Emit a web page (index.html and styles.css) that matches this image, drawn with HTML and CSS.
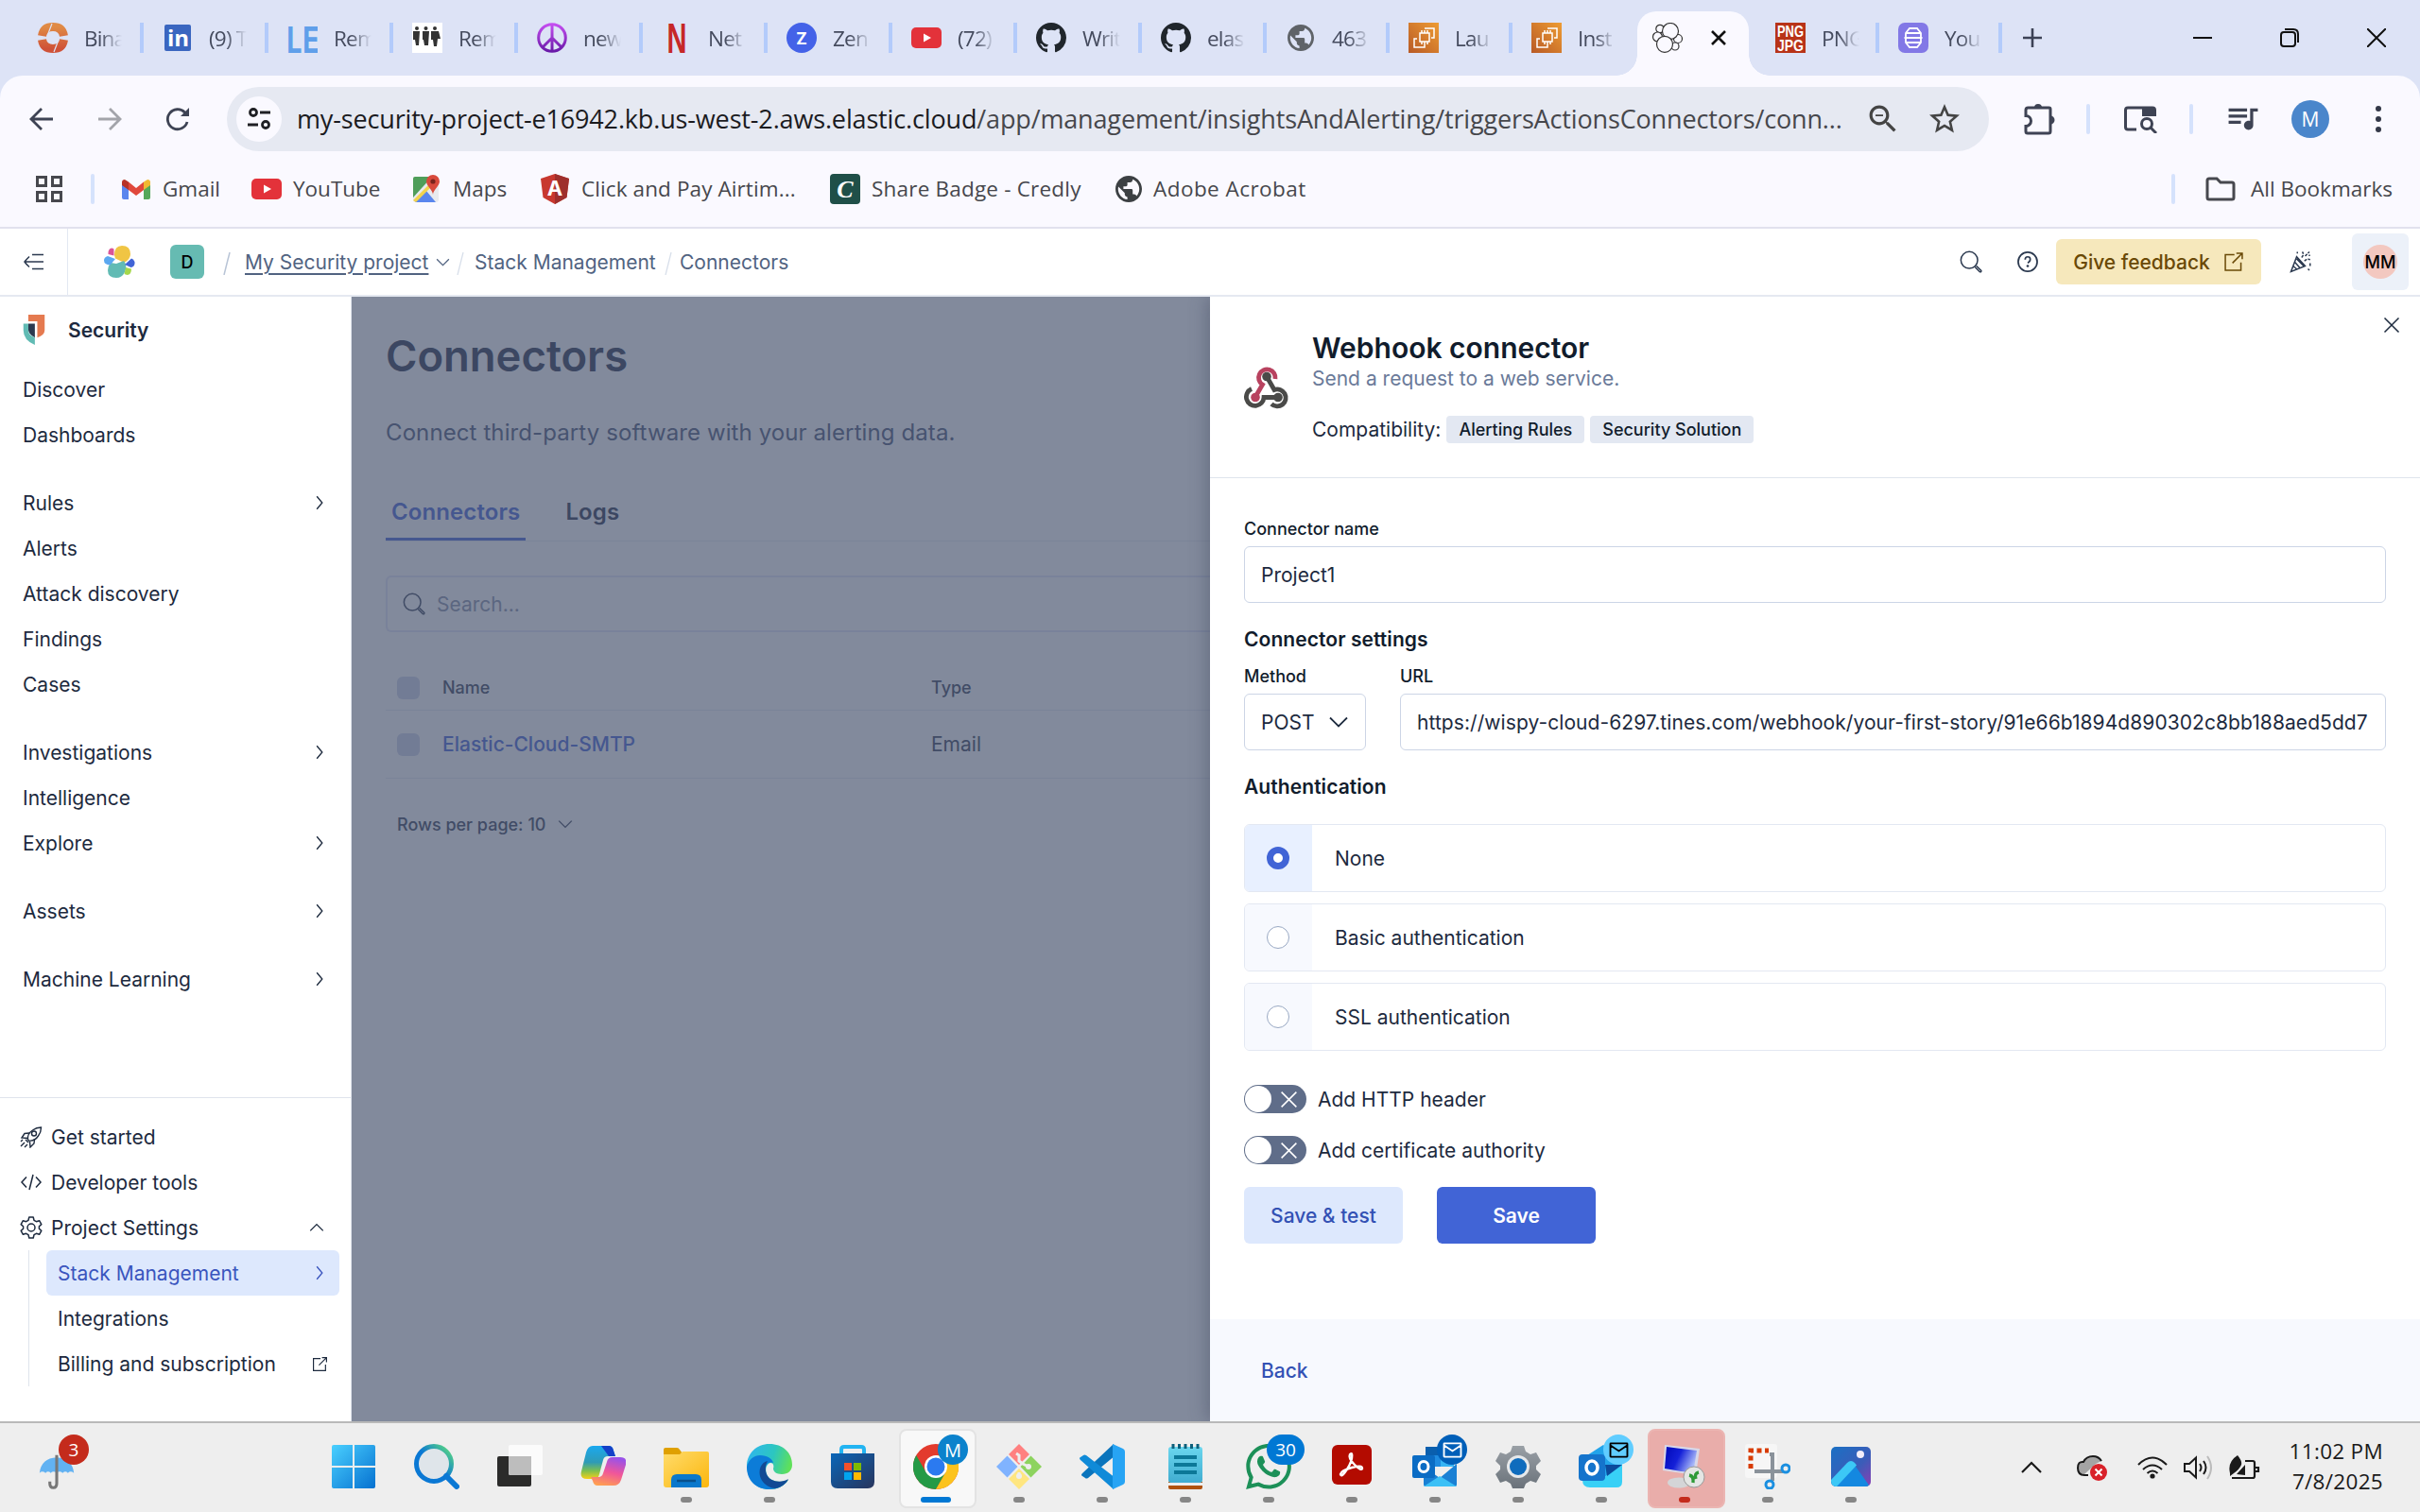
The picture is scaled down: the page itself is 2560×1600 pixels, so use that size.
FILE: index.html
```html
<!DOCTYPE html>
<html lang="en">
<head>
<meta charset="utf-8">
<title>Connectors - Elastic</title>
<link rel="stylesheet" href="styles.css">
</head>
<body>
<svg class="defs" width="0" height="0" aria-hidden="true">
  <defs>
    <linearGradient id="gBlue" x1="0" y1="0" x2="1" y2="1"><stop offset="0" stop-color="#4ad0ff"/><stop offset="1" stop-color="#0671d0"/></linearGradient>
    <linearGradient id="gAws" x1="0" y1="1" x2="1" y2="0"><stop offset="0" stop-color="#b85a26"/><stop offset="1" stop-color="#ee9c33"/></linearGradient>
    <linearGradient id="gPeace" x1="0" y1="0" x2="0" y2="1"><stop offset="0" stop-color="#c44df0"/><stop offset="1" stop-color="#6a1aa8"/></linearGradient>
    <linearGradient id="gBin" x1="0" y1="0" x2="0" y2="1"><stop offset="0" stop-color="#e08a45"/><stop offset="1" stop-color="#cf5238"/></linearGradient>
    <linearGradient id="gFolder" x1="0" y1="0" x2="1" y2="1"><stop offset="0" stop-color="#ffdc6b"/><stop offset="1" stop-color="#fbb60d"/></linearGradient>
    <linearGradient id="gDeep" x1="0" y1="0" x2="1" y2="1"><stop offset="0" stop-color="#0a66b8"/><stop offset="1" stop-color="#29355c"/></linearGradient>
    <linearGradient id="gRing" x1="0" y1="1" x2="1" y2="0"><stop offset="0.5" stop-color="#0a78d4"/><stop offset="1" stop-color="#60e07a"/></linearGradient>
    <linearGradient id="gEdge" x1="0" y1="0" x2="1" y2="0.3"><stop offset="0" stop-color="#2fb4f2"/><stop offset="0.6" stop-color="#2cc6c0"/><stop offset="1" stop-color="#5fe05a"/></linearGradient>
    <linearGradient id="gCopA" x1="0" y1="0" x2="0" y2="1"><stop offset="0" stop-color="#1aa8f0"/><stop offset="0.5" stop-color="#2f9bb5"/><stop offset="0.75" stop-color="#7cbf50"/><stop offset="1" stop-color="#f5d018"/></linearGradient>
    <linearGradient id="gCopB" x1="0.6" y1="0" x2="0.3" y2="1"><stop offset="0" stop-color="#9a52e8"/><stop offset="0.5" stop-color="#f0569a"/><stop offset="1" stop-color="#ffa050"/></linearGradient>
    <linearGradient id="gPhoto" x1="0" y1="0" x2="1" y2="1"><stop offset="0" stop-color="#1a70c4"/><stop offset="0.6" stop-color="#3c5cb8"/><stop offset="1" stop-color="#8a3fb4"/></linearGradient>
    <linearGradient id="gScreen" x1="0" y1="0" x2="1" y2="0.4"><stop offset="0" stop-color="#0008b8"/><stop offset="0.5" stop-color="#1420d8"/><stop offset="1" stop-color="#a8b8f8"/></linearGradient>
    <linearGradient id="gNote" x1="0" y1="0" x2="0" y2="1"><stop offset="0" stop-color="#6ad6ee"/><stop offset="1" stop-color="#40acd0"/></linearGradient>
    <linearGradient id="gGear" x1="0" y1="0" x2="0" y2="1"><stop offset="0" stop-color="#9aa0a6"/><stop offset="1" stop-color="#6a727a"/></linearGradient>
    <symbol id="github" viewBox="0 0 16 16"><path d="M8 0C3.58 0 0 3.58 0 8c0 3.54 2.29 6.53 5.47 7.59.4.07.55-.17.55-.38 0-.19-.01-.82-.01-1.49-2.01.37-2.53-.49-2.69-.94-.09-.23-.48-.94-.82-1.13-.28-.15-.68-.52-.01-.53.63-.01 1.08.58 1.23.82.72 1.21 1.87.87 2.33.66.07-.52.28-.87.51-1.07-1.78-.2-3.64-.89-3.64-3.95 0-.87.31-1.59.82-2.15-.08-.2-.36-1.02.08-2.12 0 0 .67-.21 2.2.82.64-.18 1.32-.27 2-.27.68 0 1.36.09 2 .27 1.53-1.04 2.2-.82 2.2-.82.44 1.1.16 1.92.08 2.12.51.56.82 1.27.82 2.15 0 3.07-1.87 3.75-3.65 3.95.29.25.54.73.54 1.48 0 1.07-.01 1.93-.01 2.2 0 .21.15.46.55.38A8.013 8.013 0 0016 8c0-4.42-3.58-8-8-8z" fill="#20262c"/></symbol>
    <symbol id="globe" viewBox="2 2 20 20"><path fill="currentColor" d="M12 2C6.48 2 2 6.48 2 12s4.48 10 10 10 10-4.48 10-10S17.52 2 12 2zm-1 17.93c-3.95-.49-7-3.85-7-7.93 0-.62.08-1.21.21-1.79L9 15v1c0 1.1.9 2 2 2v1.93zm6.9-2.54c-.26-.81-1-1.39-1.9-1.39h-1v-3c0-.55-.45-1-1-1H8v-2h2c.55 0 1-.45 1-1V7h2c1.1 0 2-.9 2-2v-.41c2.93 1.19 5 4.06 5 7.41 0 2.08-.8 3.97-2.1 5.39z"/></symbol>
    <symbol id="youtube" viewBox="0 0 32 32"><rect y="5" width="32" height="22" rx="5" fill="#e3323a"/><path d="M13 11.500l8 4.500-8 4.500z" fill="#fff"/></symbol>
    <symbol id="aws" viewBox="0 0 32 32"><rect width="32" height="32" fill="url(#gAws)"/><g fill="none" stroke="#fff" stroke-width="1.500"><rect x="12" y="11" width="10" height="9"/><path d="M14 8v3M17 8v3M20 8v3M14 20v3M17 20v3M20 20v3M9 17H6v9h11v-3M17 6h10v10h-3"/></g></symbol>
    <symbol id="chev-r" viewBox="0 0 16 16"><path d="M5.500 2l5 6-5 6" fill="none" stroke="currentColor" stroke-width="1.200"/></symbol>
    <symbol id="chev-d" viewBox="0 0 16 16"><path d="M2 5l6 6 6-6" fill="none" stroke="currentColor" stroke-width="1.200"/></symbol>
    <symbol id="search" viewBox="0 0 16 16"><g fill="none" stroke="currentColor"><circle cx="6.800" cy="6.800" r="5.900"/><path d="M10.800 11.600l3.400 3.500q.6.300.9-.1t0-.9L11.700 10.800"/></g></symbol>
    <symbol id="popout" viewBox="0 0 16 16"><path d="M8.500 2.500h-7v12h12v-6M10 1.500h4.500V6M14.500 1.500l-7.500 7.500" fill="none" stroke="currentColor" stroke-width="1.100"/></symbol>
    <symbol id="close" viewBox="0 0 16 16"><path d="M2 2l12 12M14 2L2 14" fill="none" stroke="currentColor" stroke-width="1.200"/></symbol>
  </defs>
</svg>

<header class="browser">
  <div class="tabstrip">
    <div class="tab"><svg class="fav" viewBox="0 0 32 32"><g fill="none" stroke="url(#gBin)" stroke-width="9"><path d="M4.500 14Q6 4.500 16 4.500T27.500 14M27.500 18Q26 27.500 16 27.500T4.500 18"/></g><path d="M10 14L15 1M22 18l-5 13" stroke="#dde3f6" stroke-width="1.200"/></svg><span>Bina</span></div>
    <div class="tab"><svg class="fav" viewBox="0 0 32 32"><rect x="2" y="2" width="28" height="28" rx="2" fill="#3a66c0"/><text x="5" y="25" class="ico-in">in</text></svg><span>(9) T</span></div>
    <div class="tab"><svg class="fav" viewBox="0 0 32 32"><text x="-2" y="32" class="ico-le" textLength="36" lengthAdjust="spacingAndGlyphs">LE</text></svg><span>Rem</span></div>
    <div class="tab"><svg class="fav" viewBox="0 0 32 32"><rect width="32" height="32" fill="#fff"/><g fill="#333"><circle cx="5" cy="6" r="2"/><circle cx="14.500" cy="6" r="2"/><circle cx="24" cy="6" r="2"/><path d="M1 9h7l-1 15H4L3 18H1zM11 9h7l-1 15h-4l-1-6h-1zM20 9h8l2 8h-3l-1 8h-3l-1-7h-2z"/></g></svg><span>Rem</span></div>
    <div class="tab"><svg class="fav" viewBox="0 0 32 32"><g fill="none" stroke="url(#gPeace)" stroke-width="3"><circle cx="16" cy="16" r="14.300"/><path d="M16.010 2v28M16 16L6 26M16 16l10 10"/></g></svg><span>new</span></div>
    <div class="tab"><svg class="fav" viewBox="0 0 32 32"><text x="5.500" y="32" class="ico-n" textLength="21" lengthAdjust="spacingAndGlyphs">N</text></svg><span>Net</span></div>
    <div class="tab"><svg class="fav" viewBox="0 0 32 32"><circle cx="16" cy="16" r="16" fill="#4462e8"/><text x="16" y="22.500" text-anchor="middle" class="ico-z">Z</text></svg><span>Zen</span></div>
    <div class="tab"><svg class="fav"><use href="#youtube"/></svg><span>(72)</span></div>
    <div class="tab"><svg class="fav"><use href="#github"/></svg><span>Writ</span></div>
    <div class="tab"><svg class="fav"><use href="#github"/></svg><span>elas</span></div>
    <div class="tab narrow"><svg class="fav globe"><use href="#globe"/></svg><span>463</span></div>
    <div class="tab narrow"><svg class="fav"><use href="#aws"/></svg><span>Lau</span></div>
    <div class="tab inst"><svg class="fav"><use href="#aws"/></svg><span>Inst</span></div>
    <div class="tab-active"><svg class="fav" viewBox="0 0 32 32"><g fill="#faf9ff" stroke="#333" stroke-width="1.200"><circle cx="8" cy="6.500" r="4.200"/><circle cx="27" cy="17" r="4.500"/><circle cx="5.500" cy="15" r="5"/><circle cx="24" cy="25" r="4"/><circle cx="19" cy="9" r="8.500"/><circle cx="13" cy="22.800" r="8.500"/></g></svg><svg class="tab-x" viewBox="0 0 16 16"><path d="M1 1l14 14M15 1L1 15" stroke="#111" stroke-width="2.600"/></svg></div>
    <div class="tab png"><svg class="fav" viewBox="0 0 32 32"><rect width="32" height="32" fill="#b83318"/><text x="2" y="14.500" class="ico-png" textLength="28" lengthAdjust="spacingAndGlyphs">PNG</text><text x="2" y="29.500" class="ico-png" textLength="28" lengthAdjust="spacingAndGlyphs">JPG</text></svg><span>PNG</span></div>
    <div class="tab narrow"><svg class="fav" viewBox="0 0 32 32"><rect width="32" height="32" rx="7" fill="#8278e6"/><g fill="none" stroke="#fff" stroke-width="1.800"><path d="M12 6h8l4 5v10l-4 5h-8l-4-5V11zM8 11h16M6.500 16h19M8 21h16"/></g></svg><span>You</span></div>
    <svg class="plus" viewBox="0 0 20 20"><path d="M10 0v20M0 10h20" stroke="#3c4256" stroke-width="2.600"/></svg>
    <div class="winctl">
      <svg viewBox="0 0 20 20"><path d="M0 10h20" stroke="#111" stroke-width="2"/></svg>
      <svg viewBox="0 0 20 20"><g fill="none" stroke="#111" stroke-width="2"><rect x="1" y="4" width="15" height="15" rx="3"/><path d="M5 1h9q5 0 5 5v9"/></g></svg>
      <svg viewBox="0 0 20 20"><path d="M0 0l20 20M20 0L0 20" stroke="#111" stroke-width="2"/></svg>
    </div>
  </div>

  <div class="toolbar">
    <svg class="nav" viewBox="0 0 28 28"><path d="M26 14H3M14 3L3 14l11 11" fill="none" stroke="#3e4354" stroke-width="2.800"/></svg>
    <svg class="nav" viewBox="0 0 28 28"><path d="M2 14h23M14 3l11 11-11 11" fill="none" stroke="#a3a4aa" stroke-width="2.800"/></svg>
    <svg class="nav" viewBox="0 0 28 28"><path d="M24 17a10.500 10.500 0 1 1-2.500-10L25 10" fill="none" stroke="#3e4354" stroke-width="2.800"/><path d="M26 2v9h-9z" fill="#3e4354"/></svg>
    <div class="omnibox">
      <div class="chip"><svg viewBox="0 0 28 28"><g fill="none" stroke="#1f2024" stroke-width="2.800"><circle cx="8" cy="7" r="3.500"/><path d="M15 7h11M2 20h11"/><circle cx="21" cy="20" r="3.500"/></g></svg></div>
      <div class="url"><b>my-security-project-e16942.kb.us-west-2.aws.elastic.cloud</b>/app/management/insightsAndAlerting/triggersActionsConnectors/conn...</div>
      <svg class="oi" viewBox="2 2 20 20"><path fill="#444" d="M15.500 14h-.79l-.28-.27C15.410 12.590 16 11.110 16 9.500 16 5.910 13.090 3 9.500 3S3 5.910 3 9.500 5.910 16 9.500 16c1.610 0 3.090-.59 4.230-1.570l.27.28v.79l5 4.990L20.490 19l-4.990-5zm-6 0C7.010 14 5 11.990 5 9.500S7.010 5 9.500 5 14 7.010 14 9.500 11.990 14 9.500 14zM7 9h5v1.200H7z"/></svg>
      <svg class="oi star" viewBox="2 2 20 20"><path fill="#444" d="M22 9.240l-7.190-.62L12 2 9.190 8.630 2 9.240l5.460 4.730L5.820 21 12 17.270 18.180 21l-1.630-7.030L22 9.240zM12 15.400l-3.760 2.270 1-4.280-3.320-2.880 4.380-.38L12 6.100l1.710 4.040 4.380.38-3.320 2.880 1 4.280L12 15.400z"/></svg>
    </div>
    <svg class="ext" viewBox="0 0 36 36"><path d="M4 8.500q0-2.500 2.500-2.500h22q1.500 0 1.500 1.500V31q0 2-2 2H6q-2 0-2-2v-5.500a5.500 5.500 0 0 0 0-11z" fill="none" stroke="#3e4354" stroke-width="3"/><path d="M13 6a4 4 0 0 1 8 0zM30 14.500a4 4 0 0 1 0 9z" fill="#3e4354"/></svg>
    <i class="tsep s1"></i>
    <svg class="tsearch" viewBox="0 0 36 30"><path d="M14 26H5q-2.500 0-2.500-2.500v-18Q2.500 3 5 3h26q2.500 0 2.500 2.500V12" fill="none" stroke="#3e4354" stroke-width="3"/><path d="M20 3h14v9H20z" fill="#3e4354"/><circle cx="25" cy="20" r="5.500" fill="none" stroke="#3e4354" stroke-width="3"/><path d="M29 24l6 6" stroke="#3e4354" stroke-width="3"/></svg>
    <i class="tsep s2"></i>
    <svg class="music" viewBox="3 5 19 16"><path fill="#3e4354" d="M15 6H3v2h12V6zm0 4H3v2h12v-2zM3 16h8v-2H3v2zM17 6v8.180c-.31-.11-.65-.18-1-.18-1.660 0-3 1.340-3 3s1.340 3 3 3 3-1.340 3-3V8h3V6h-5z"/></svg>
    <div class="profile">M</div>
    <svg class="dots" viewBox="0 0 8 28"><g fill="#333848"><circle cx="4" cy="3" r="3"/><circle cx="4" cy="14" r="3"/><circle cx="4" cy="25" r="3"/></g></svg>
  </div>

  <div class="bookmarks">
    <svg class="apps" viewBox="0 0 28 28"><g fill="none" stroke="#47484e" stroke-width="3"><rect x="1.500" y="1.500" width="9" height="9"/><rect x="17.500" y="1.500" width="9" height="9"/><rect x="1.500" y="17.500" width="9" height="9"/><rect x="17.500" y="17.500" width="9" height="9"/></g></svg>
    <i class="bsep"></i>
    <div class="bm gm"><svg viewBox="0 0 32 32"><path d="M1 8v17q0 2 2 2h5V14z" fill="#5a86ee"/><path d="M31 8v17q0 2-2 2h-5V14z" fill="#55a85a"/><path d="M24 8.500L28 6q3 0 3 3v3l-7 5z" fill="#f0b932"/><path d="M8 8.500L4 6Q1 6 1 9v3l7 5z" fill="#b83228"/><path d="M8 8.500l8 6.500 8-6.500V17l-8 6-8-6z" fill="#e0483c"/></svg><span>Gmail</span></div>
    <div class="bm yt"><svg><use href="#youtube"/></svg><span>YouTube</span></div>
    <div class="bm mp"><svg viewBox="0 0 32 32"><rect x="2" y="3" width="27" height="27" rx="3" fill="#e8eaee"/><path d="M2 5q0-2 2-2h18L2 25z" fill="#4f9e5a"/><path d="M4 30l12-12 10 12z" fill="#5a86ee"/><path d="M2 28L24 6l2 3L5 30z" fill="#f2d34e"/><path d="M23 1a7 7 0 0 0-7 7c0 5 7 9 7 14 0-5 7-9 7-14a7 7 0 0 0-7-7z" fill="#d84a3c"/><circle cx="23" cy="8" r="2.600" fill="#7a241c"/></svg><span>Maps</span></div>
    <div class="bm an"><svg viewBox="0 0 32 32"><path d="M16 0l15 5-2.500 20L16 32 3.500 25 1 5z" fill="#c8382f"/><path d="M16 0l15 5-2.500 20L16 32z" fill="#9e2f2c"/><text x="16" y="23" text-anchor="middle" class="ico-a">A</text></svg><span>Click and Pay Airtim...</span></div>
    <div class="bm cr"><svg viewBox="0 0 32 32"><rect width="32" height="32" rx="4" fill="#1f4f48"/><text x="16" y="25" text-anchor="middle" class="ico-c">C</text></svg><span>Share Badge - Credly</span></div>
    <div class="bm ad"><svg class="globe"><use href="#globe"/></svg><span>Adobe Acrobat</span></div>
    <div class="allbm"><i class="bsep"></i><svg viewBox="0 0 32 26"><path d="M2 4q0-2 2-2h8l4 4h12q2 0 2 2v14q0 2-2 2H4q-2 0-2-2z" fill="none" stroke="#47484e" stroke-width="3"/></svg><span>All Bookmarks</span></div>
  </div>
</header>

<div class="appbar">
  <div class="collapse"><svg viewBox="0 0 24 24"><path d="M10 4.500h12M3 12h19M10 19.500h12M7 6.500q-3 3-5 5.500 2 3 5 5.500" fill="none" stroke="#2b394f" stroke-width="1.500"/></svg></div>
  <svg class="elastic" viewBox="0 0 34 34"><path d="M12 10q0-10 8-10 9 0 9 9 0 5-6.500 9L13 13.500z" fill="#f0c544"/><path d="M14 19l8-3q4 5 1 12-3 6-9 6-9 0-9-8 0-4 3-8z" fill="#61bbb4"/><path d="M5 11l8 3-5.500 6.500Q1 20 1 15.500 1 12 5 11z" fill="#5ba8f0"/><path d="M11.500 3.500v7L5.500 9Q5 3 9.500 2.500z" fill="#da5597"/><path d="M30 13.500q4 2 3.500 5.500T29.500 23l-6.500-3z" fill="#4164d6"/><path d="M24 23l6 1.500q0 6-4.500 6.500l-3-1z" fill="#a5d84c"/></svg>
  <div class="dbadge">D</div>
  <svg class="sl dark" viewBox="0 0 8 24"><path d="M7 0L1 24" stroke="#b8c4d6" stroke-width="1.500"/></svg>
  <div class="crumb c1"><u>My Security project</u><svg><use href="#chev-d"/></svg></div>
  <svg class="sl" viewBox="0 0 8 24"><path d="M7 0L1 24" stroke="#d8dfea" stroke-width="1.300"/></svg>
  <div class="crumb c2">Stack Management</div>
  <svg class="sl" viewBox="0 0 8 24"><path d="M7 0L1 24" stroke="#d8dfea" stroke-width="1.300"/></svg>
  <div class="crumb c3">Connectors</div>
  <div class="appright">
    <svg class="ai"><use href="#search"/></svg>
    <svg class="ai help" viewBox="0 0 16 16"><g fill="none" stroke="currentColor" stroke-width="1.150"><circle cx="8" cy="8" r="6.700"/><path d="M6.200 6.500q0-2 1.800-2t1.800 1.700T8 8.800"/></g><circle cx="8" cy="11" r=".9" fill="currentColor"/></svg>
    <div class="feedback">Give feedback<svg><use href="#popout"/></svg></div>
    <svg class="ai party" viewBox="0 0 16 16"><g fill="none" stroke="currentColor"><path d="M5 4.500L1 15l10-4zM3.500 8l4 4.500M5 6l5 5M2.500 11l3 2.500"/><path d="M8.500 5q2-2 .5-4M10.500 7.500q2-2 4-1M11 4l3-3" stroke-dasharray="2 .8"/><path d="M14.500 9v2M13 13l1 1M5.500 1v1.200M13.500 3.500h1"/></g></svg>
    <div class="user"><span>MM</span></div>
  </div>
</div>

<div class="workspace">
  <nav class="side">
    <div class="solution"><svg viewBox="0 0 26 37"><path d="M6 0h20v19q0 6-9 9V8H6z" fill="#e57a50"/><path d="M6 11h8v17Q6 24 6 18z" fill="#2b394f"/><path d="M0 11h6v8q0 6 8 9v9Q0 31 0 19z" fill="#61bbb4"/></svg><b>Security</b></div>
    <div class="grp"><div class="it">Discover</div><div class="it">Dashboards</div></div>
    <div class="grp"><div class="it">Rules<svg><use href="#chev-r"/></svg></div><div class="it">Alerts</div><div class="it">Attack discovery</div><div class="it">Findings</div><div class="it">Cases</div></div>
    <div class="grp"><div class="it">Investigations<svg><use href="#chev-r"/></svg></div><div class="it">Intelligence</div><div class="it">Explore<svg><use href="#chev-r"/></svg></div></div>
    <div class="grp"><div class="it">Assets<svg><use href="#chev-r"/></svg></div></div>
    <div class="grp"><div class="it">Machine Learning<svg><use href="#chev-r"/></svg></div></div>
    <div class="foot">
      <div class="fi"><svg viewBox="0 0 24 24"><g fill="none" stroke="currentColor" stroke-width="1.400"><path d="M9 15q-1-6 5-10 4-3 9-3 0 5-3 9-4 6-10 5z" transform="translate(-.5 0)"/><circle cx="15" cy="8.500" r="2.500"/><path d="M10 8L5 8.500 2 13l6 .5M15.500 14.500L15 19l-4 4-.5-6M6 15l3 3M5 18l-4 4M8 20l-3 3M3 15l-2 2"/></g></svg>Get started</div>
      <div class="fi"><svg viewBox="0 0 24 24"><path d="M7 6.500L2 12l5 5.500M17 6.500l5 5.500-5 5.500M14 4l-4 16" fill="none" stroke="currentColor" stroke-width="1.500"/></svg>Developer tools</div>
      <div class="fi"><svg viewBox="0 0 24 24"><g fill="none" stroke="currentColor" stroke-width="1.500" stroke-linejoin="round"><circle cx="12" cy="12" r="4"/><path d="M9.800 1h4.400l.8 3.300 2.400 1.400 3.200-1 2.200 3.900-2.400 2.200v2.400l2.400 2.200-2.200 3.900-3.200-1-2.400 1.400-.8 3.300H9.800L9 19.700l-2.400-1.400-3.200 1-2.200-3.900 2.400-2.200v-2.400L1.200 8.600l2.200-3.900 3.200 1L9 4.300z"/></g></svg>Project Settings<svg class="up" viewBox="0 0 16 16"><path d="M2 11l6-6 6 6" fill="none" stroke="currentColor" stroke-width="1.200"/></svg></div>
      <div class="sub">
        <div class="si on">Stack Management<svg><use href="#chev-r"/></svg></div>
        <div class="si">Integrations</div>
        <div class="si">Billing and subscription<svg class="po"><use href="#popout"/></svg></div>
      </div>
    </div>
  </nav>

  <main class="main">
    <h1>Connectors</h1>
    <p class="lead">Connect third-party software with your alerting data.</p>
    <div class="tabs"><span class="cur">Connectors</span><span>Logs</span></div>
    <div class="searchbox"><svg><use href="#search"/></svg>Search...</div>
    <div class="row head"><i class="cb"></i><span class="nm">Name</span><span>Type</span></div>
    <div class="row"><i class="cb"></i><span class="nm link">Elastic-Cloud-SMTP</span><span>Email</span></div>
    <div class="pager">Rows per page: 10<svg><use href="#chev-d"/></svg></div>
  </main>

  <aside class="flyout">
    <svg class="fclose"><use href="#close"/></svg>
    <div class="fhead">
      <svg viewBox="0 0 48 46"><g fill="none" stroke-width="4.800"><path d="M12 33L19.500 20A8.800 8.800 0 1 1 33 14" stroke="#b8425f"/><path d="M24 11.500L32 25.500a9 9 0 1 1-3 15" stroke="#4a4a48"/><path d="M36 33.500H21a9.300 9.300 0 1 1-13-9" stroke="#4a4a48"/></g><circle cx="24" cy="11.500" r="4.800" fill="#4a4a48"/><circle cx="12" cy="33.500" r="4.800" fill="#b8425f"/><circle cx="36" cy="33.500" r="4.800" fill="#4a4a48"/></svg>
      <div>
        <h2>Webhook connector</h2>
        <p>Send a request to a web service.</p>
        <div class="compat">Compatibility:<span>Alerting Rules</span><span>Security Solution</span></div>
      </div>
    </div>
    <div class="fbody">
      <label>Connector name</label>
      <div class="input">Project1</div>
      <h3>Connector settings</h3>
      <div class="pair">
        <div class="method"><label>Method</label><div class="input">POST<svg><use href="#chev-d"/></svg></div></div>
        <div class="urlf"><label>URL</label><div class="input">https://wispy-cloud-6297.tines.com/webhook/your-first-story/91e66b1894d890302c8bb188aed5dd7</div></div>
      </div>
      <h3>Authentication</h3>
      <div class="cards">
        <div class="card sel"><div><i></i></div><span>None</span></div>
        <div class="card"><div><i></i></div><span>Basic authentication</span></div>
        <div class="card"><div><i></i></div><span>SSL authentication</span></div>
      </div>
      <div class="switches">
        <div class="sw"><i><b></b><svg><use href="#close"/></svg></i>Add HTTP header</div>
        <div class="sw"><i><b></b><svg><use href="#close"/></svg></i>Add certificate authority</div>
      </div>
      <div class="btns"><div class="btn soft">Save &amp; test</div><div class="btn solid">Save</div></div>
    </div>
    <div class="ffoot">Back</div>
  </aside>
</div>

<footer class="taskbar">
  <div class="weather"><svg viewBox="0 0 44 44"><path d="M2 25Q4 8 22 7q18 1 20 18-4-3-7 0-3-3-6 0-4-3-7 0-4-3-7 0-3-3-6 0-4-3-7 0z" fill="#62b2f2"/><path d="M22 4v33q0 5-4 5t-4-5v-2" fill="none" stroke="#777" stroke-width="3.400"/></svg><span>3</span></div>
  <div class="tasks">
    <div class="t"><svg viewBox="0 0 48 48"><g fill="url(#gBlue)"><rect x="1" y="1" width="46" height="46" rx="2"/></g><path d="M24 0v48M0 24h48" stroke="#eee" stroke-width="2"/></svg></div>
    <div class="t"><svg viewBox="0 0 48 48"><circle cx="21" cy="21" r="18.500" fill="#dfe5ea" stroke="url(#gRing)" stroke-width="5"/><path d="M34 34l11 11" stroke="#0a78d4" stroke-width="6" stroke-linecap="round"/></svg></div>
    <div class="t"><svg viewBox="0 0 48 48"><rect x="0" y="13" width="36" height="32" rx="2" fill="#2b2b2a"/><rect x="12" y="1" width="36" height="32" rx="2" fill="#fbfbfb"/><path d="M12 13h24v20H14q-2 0-2-2z" fill="#bdbdbd"/></svg></div>
    <div class="t"><svg viewBox="0 0 48 48"><path d="M13 2h17q4 0 5 5l2 6h-8q-4 0-5 4l-4 15q-1 5-5 5H7Q-1 37 1 29L6 9q2-7 7-7z" fill="url(#gCopA)"/><path d="M22 2h8q4 0 5 5l2 6h-7z" fill="#1440c8"/><path d="M35 44H18q-4 0-5-5l-2-4h8q4 0 5-4l4-12q1-5 6-5h8q8 0 6 8l-5 16q-2 6-8 6z" fill="url(#gCopB)"/></svg></div>
    <div class="t"><svg viewBox="0 0 48 48"><path d="M0 12V6q0-2 2-2h12q2 0 3 2l3 4v4z" fill="#dfa000"/><path d="M0 11h17l3-3h26q2 0 2 2v33q0 3-3 3H3q-3 0-3-3z" fill="url(#gFolder)"/><path d="M8 46V38q0-6 6-6h20q6 0 6 6v8z" fill="#0a78cc"/><path d="M14 39h20" stroke="#08508c" stroke-width="2.500"/></svg><i></i></div>
    <div class="t"><svg viewBox="0 0 48 48"><path d="M24 0C10 0 1 10 0 22 0 38 10 48 24 48c8 0 15-3 20-10-8 4-20 2-23-6-2-6 0-11 4-12 3 0 4 3 3 6 0 3 3 6 9 6 7 0 11-4 11-10C48 9 38 0 24 0z" fill="url(#gEdge)"/><path d="M0 24c2-8 8-12 14-12 8 0 13 4 14 8-4-2-9 1-9 9 0 9 9 13 16 13 4 0 7-2 9-4-5 7-12 10-20 10C9 48 0 38 0 24z" fill="#0c7cd8"/><path d="M22 18c-9 2-11 14-5 22 3 4 9 7 13 7 6-1 12-5 14-10-8 5-20 3-23-5-2-5-1-11 1-14z" fill="#124a94"/></svg><i></i></div>
    <div class="t"><svg viewBox="0 0 48 48"><path d="M12 10V6q0-3 3-3h18q3 0 3 3v4" fill="none" stroke="#22b4f2" stroke-width="4"/><path d="M1 10h46v30q0 7-7 7H8q-7 0-7-7z" fill="url(#gDeep)"/><path d="M15 20h8v8h-8z" fill="#f2502a"/><path d="M25 20h8v8h-8z" fill="#7fba00"/><path d="M15 30h8v8h-8z" fill="#00a4ef"/><path d="M25 30h8v8h-8z" fill="#ffb900"/></svg></div>
    <div class="t active"><svg viewBox="0 0 48 48"><circle cx="24" cy="24" r="24" fill="#e33b2e"/><path d="M3.200 12A24 24 0 0 0 24 48L34.400 30H13.600z" fill="#249a46"/><path d="M24 48A24 24 0 0 0 44.800 12H24l10.400 18z" fill="#fcc31e"/><circle cx="24" cy="24" r="12" fill="#fff"/><circle cx="24" cy="24" r="9.500" fill="#2b7af0"/></svg><em class="bd-m">M</em><i></i></div>
    <div class="t"><svg viewBox="0 0 48 48"><path d="M24 0l11 11-11 11-11-11z" fill="#ff8080"/><path d="M11.500 12.500l11 11.500-11 11.500L0 24z" fill="#80b3ff"/><path d="M36.500 12.500L48 24 36.500 35.500 25.500 24z" fill="#8dd35f"/><path d="M24 26l11 11-11 11-11-11z" fill="#ffe680"/><path d="M21 10l3 2v6l4 3 6 3M24 30v6" fill="none" stroke="#eee" stroke-width="3"/><circle cx="24" cy="34" r="3" fill="#eee"/><circle cx="34" cy="24" r="3" fill="#eee"/></svg><i></i></div>
    <div class="t"><svg viewBox="0 0 48 48"><path d="M36 0L3 31q-2 2 0 3l3 2q1 1 3 0L38 12z" fill="#0a74bc"/><path d="M36 48L1 17q-2-2 0-3l3-2q1-1 3 0l31 24z" fill="#0f8ad8"/><path d="M35 0l11 5q2 1 2 3v32q0 2-2 3l-11 5z" fill="#27a4f4"/></svg><i></i></div>
    <div class="t"><svg viewBox="0 0 48 48"><path d="M6 40h36v6q0 2-2 2H8q-2 0-2-2z" fill="#b0520e"/><rect x="6" y="3" width="36" height="38" rx="3" fill="url(#gNote)"/><path d="M6 41h36v3H6z" fill="#eee"/><path d="M12 14h24M12 22h24M12 30h24" stroke="#0c7898" stroke-width="4"/><path d="M11 0v5M17.500 0v5M24 0v5M30.500 0v5M37 0v5" stroke="#0c607c" stroke-width="3"/></svg><i></i></div>
    <div class="t"><svg viewBox="0 0 24 24"><path fill="#1c9058" d="M17.472 14.382c-.297-.149-1.758-.867-2.030-.967-.273-.099-.471-.148-.67.15-.197.297-.767.966-.94 1.164-.173.199-.347.223-.644.075-.297-.15-1.255-.463-2.390-1.475-.883-.788-1.480-1.761-1.653-2.059-.173-.297-.018-.458.13-.606.134-.133.298-.347.446-.52.149-.174.198-.298.298-.497.099-.198.05-.371-.025-.52-.075-.149-.669-1.612-.916-2.207-.242-.579-.487-.5-.669-.51-.173-.008-.371-.01-.57-.01-.198 0-.52.074-.792.372-.272.297-1.040 1.016-1.040 2.479 0 1.462 1.065 2.875 1.213 3.074.149.198 2.096 3.200 5.077 4.487.709.306 1.262.489 1.694.625.712.227 1.360.195 1.871.118.571-.085 1.758-.719 2.006-1.413.248-.694.248-1.289.173-1.413-.074-.124-.272-.198-.57-.347m-5.421 7.403h-.004a9.870 9.870 0 01-5.031-1.378l-.361-.214-3.741.982.998-3.648-.235-.374a9.860 9.860 0 01-1.510-5.260c.001-5.450 4.436-9.884 9.888-9.884 2.640 0 5.122 1.030 6.988 2.898a9.825 9.825 0 012.893 6.994c-.003 5.450-4.437 9.884-9.885 9.884m8.413-18.297A11.815 11.815 0 0012.050 0C5.495 0 .16 5.335.157 11.892c0 2.096.547 4.142 1.588 5.945L.057 24l6.305-1.654a11.882 11.882 0 005.683 1.448h.005c6.554 0 11.890-5.335 11.893-11.893a11.821 11.821 0 00-3.480-8.413z"/></svg><em class="bd-30">30</em><i></i></div>
    <div class="t"><svg viewBox="0 0 48 48"><rect x="3" y="1" width="42" height="42" rx="6" fill="#b30b00"/><path d="M12 32q1-4 12-7t11 1q-1 3-8-4t-5-11q3-3 2 4t-8 16q-3 4-4 1z" fill="none" stroke="#fff" stroke-width="2.400"/></svg><i></i></div>
    <div class="t"><svg viewBox="0 0 48 48"><path d="M14 3h30v18H14z" fill="#0a5fae"/><path d="M14 12h16v12H14z" fill="#1f8be0"/><path d="M30 12h14v12H30z" fill="#35b4f4"/><path d="M12 24l17 12 18-15v22q0 2-2 2H14q-2 0-2-2z" fill="#1a80d4"/><path d="M12 45l17-11 18 11z" fill="#3cc0f6"/><rect x="0" y="12" width="24" height="24" rx="2" fill="#0b6cc4"/><ellipse cx="12" cy="24" rx="5" ry="5.500" fill="none" stroke="#fff" stroke-width="3"/></svg><em class="bd-mail"><svg viewBox="0 0 22 18"><path d="M2 1.500h18q.5 0 .5.500v14q0 .5-.5.500H2q-.5 0-.5-.5V2q0-.5.500-.5zM2 4l9 6 9-6" fill="none" stroke="currentColor" stroke-width="2"/></svg></em><i></i></div>
    <div class="t"><svg viewBox="0 0 48 48"><path d="M18 2h12l2 6 5 3 6-2 5 9-5 5v4l5 5-5 9-6-2-5 3-2 5H18l-2-5-5-3-6 2-5-9 5-5v-4L0 18l5-9 6 2 5-3z" fill="url(#gGear)"/><circle cx="24" cy="24" r="12" fill="#e6e8ea"/><circle cx="24" cy="24" r="9" fill="#0f6cbd"/></svg><i></i></div>
    <div class="t"><svg viewBox="0 0 48 48"><path d="M6 14L26 1l20 13v8L26 36z" fill="#22a4ea"/><path d="M26 36L46 20v20q0 6-6 6H12q-8 0-8-8z" fill="#38d0f6"/><path d="M28 22h18L30 34z" fill="#0b4a9c"/><rect x="0" y="11" width="28" height="28" rx="4" fill="#1574cc"/><ellipse cx="14" cy="25" rx="6" ry="7" fill="none" stroke="#fff" stroke-width="3.500"/></svg><em class="bd-mail light"><svg viewBox="0 0 22 18"><path d="M2 1.500h18q.5 0 .5.500v14q0 .5-.5.500H2q-.5 0-.5-.5V2q0-.5.500-.5zM2 4l9 6 9-6" fill="none" stroke="currentColor" stroke-width="2"/></svg></em><i></i></div>
    <div class="t alert"><svg viewBox="0 0 48 48"><ellipse cx="18" cy="41" rx="12" ry="5.500" fill="#d4d5d7"/><path d="M3 1l37 4-4 28-35-5z" fill="#d8d8e8"/><path d="M5 3l32 4-4 24-30-5z" fill="url(#gScreen)"/><circle cx="34" cy="35" r="11" fill="#e4e6e4" stroke="#999" stroke-width="1"/><path d="M29 33q5 1 4 8M39 30q-5 1-3 7" fill="none" stroke="#2f9a38" stroke-width="3.400"/></svg><i></i></div>
    <div class="t"><svg viewBox="0 0 48 48"><rect x="0" y="0" width="34" height="36" rx="3" fill="#f6f6f6"/><path d="M6 26V7h19" fill="none" stroke="#d83b01" stroke-width="5" stroke-dasharray="5 3.500"/><path d="M26 11h3v28M12 27v2h28" fill="none" stroke="#8a929a" stroke-width="4"/><circle cx="43" cy="26" r="4" fill="none" stroke="#1a8fe0" stroke-width="3"/><circle cx="26" cy="43" r="4" fill="none" stroke="#1a8fe0" stroke-width="3"/></svg><i></i></div>
    <div class="t"><svg viewBox="0 0 48 48"><rect x="3" y="3" width="42" height="42" rx="5" fill="url(#gPhoto)"/><path d="M5 43.500L21 21q3-4 6 0l16 22.500q-1 1.500-4 1.500H9q-3 0-4-1.500z" fill="#1488e0"/><path d="M3 38l17-18q4-4 8 0l2 2.500L9 45Q3 45 3 39z" fill="#3cc8f6"/><circle cx="34" cy="11" r="4" fill="#f4eefa"/></svg><i></i></div>
  </div>
  <div class="tray">
    <svg class="y1" viewBox="0 0 22 14"><path d="M1 12L11 2l10 10" fill="none" stroke="#1a1a1a" stroke-width="2.200"/></svg>
    <svg class="y2" viewBox="0 0 34 28"><path d="M9 21Q2 21 2 14.500T8 8q3-6 10-6 6 0 9 5l-6 3-12 11z" fill="#a4a4a4"/><path d="M13 22H9Q2 22 2 14.500T8 8q3-6 10-6 6 0 9 5" fill="none" stroke="#1a1a1a" stroke-width="2"/><circle cx="24" cy="19" r="9" fill="#d9222a"/><path d="M20.500 15.500l7 7M27.500 15.500l-7 7" stroke="#fff" stroke-width="2"/></svg>
    <svg class="y3" viewBox="0 0 32 24"><g fill="none" stroke="#1a1a1a" stroke-width="2"><path d="M1 9Q16-6 31 9M6 14q10-9 20 0M10.500 18q5.500-5 11 0"/></g><circle cx="16" cy="21" r="2.600" fill="#1a1a1a"/></svg>
    <svg class="y4" viewBox="0 0 32 28"><g fill="none" stroke="#1a1a1a" stroke-width="2"><path d="M2 10h5l7-6.500v21L7 18H2zM18 10q3 4 0 8M22 7q5 7 0 14"/><path d="M26 2q8 12 0 24" stroke="#bbb"/></g></svg>
    <svg class="y5" viewBox="0 0 34 28"><path d="M18 7h8q2 0 2 2v14q0 2-2 2H4M28 14h4v4h-4" fill="none" stroke="#1a1a1a" stroke-width="2.200"/><path d="M2 20Q-1 8 10 1q5 6 4 10-2 5-8 9l-4 3zM9 21l9-10v11z" fill="#1a1a1a"/></svg>
    <div class="clock"><span>11:02 PM</span><span>7/8/2025</span></div>
  </div>
</footer>
</body>
</html>
```
FILE: styles.css
```css
* { box-sizing: border-box; }
body { margin: 0; width: 2560px; height: 1600px; overflow: hidden; display: flex; flex-direction: column; background: #fff; font-family: Inter, sans-serif; font-size: 21px; color: #1d2a3e; }
.defs { position: absolute; }
svg { flex: none; display: block; }
h1, h2, h3, p { margin: 0; }
i, em { font-style: normal; }

/* browser chrome */
.browser { flex: none; height: 242px; background: #dde3f6; font-family: "Open Sans", "Noto Sans", sans-serif; border-bottom: 2px solid #e1e1ee; display: flex; flex-direction: column; }
.tabstrip { height: 80px; padding-left: 20px; display: flex; align-items: center; }
.tab { flex: none; width: 132px; height: 32px; padding-left: 20px; border-right: 4px solid #b3cbfb; display: flex; align-items: center; gap: 17px; font-size: 22.500px; color: #454b5e; }
.tab.narrow { width: 130px; }
.tab.inst { width: 132px; border: 0; }
.tab.png { width: 138px; padding-left: 28px; }
.tab span { width: 40px; white-space: nowrap; letter-spacing: -0.8px; line-height: 32px; padding-top: 2px; -webkit-mask-image: linear-gradient(90deg, #000 45%, transparent); mask-image: linear-gradient(90deg, #000 45%, transparent); }
.fav { width: 32px; height: 32px; }
.fav.globe { width: 28px; height: 28px; margin: 2px; color: #5f6368; }
.tab-active { flex: none; width: 118px; height: 68px; margin-top: 12px; align-self: flex-start; background: #faf9ff; border-radius: 20px 20px 0 0; display: flex; align-items: center; padding: 0 0 12px 16px; gap: 30px; position: relative; }
.tab-active::before, .tab-active::after { content: ""; position: absolute; bottom: 0; width: 22px; height: 22px; }
.tab-active::before { left: -22px; background: radial-gradient(circle at 0 0, transparent 21.500px, #faf9ff 22px); }
.tab-active::after { right: -22px; background: radial-gradient(circle at 100% 0, transparent 21.500px, #faf9ff 22px); }
.tab-x { width: 16px; height: 16px; }
.plus { width: 20px; height: 20px; margin-left: 22px; }
.winctl { margin-left: auto; display: flex; gap: 72px; padding-right: 36px; }
.winctl svg { width: 20px; height: 20px; }
.toolbar { height: 92px; background: #faf9ff; border-radius: 24px 24px 0 0; display: flex; align-items: center; padding-left: 30px; }
.toolbar .nav { width: 28px; height: 28px; margin-right: 44px; }
.toolbar .nav:nth-child(3) { margin-right: 37px; }
.omnibox { width: 1864px; height: 68px; border-radius: 34px; background: #e6e9f2; display: flex; align-items: center; margin-left: 1px; padding-left: 10px; }
.chip { width: 48px; height: 48px; border-radius: 50%; background: #faf9ff; display: grid; place-items: center; }
.chip svg { width: 28px; height: 28px; }
.url { width: 1674px; padding-left: 16px; font-size: 27px; white-space: nowrap; color: #46474c; letter-spacing: -0.15px; line-height: 40px; }
.url b { font-weight: 400; color: #1b1b1f; }
.oi { width: 32px; height: 32px; margin-left: 4px; }
.oi.star { margin-left: 33px; }
.ext { width: 36px; height: 36px; margin-left: 35px; }
.tsep { width: 4px; height: 32px; background: #d5e2fc; border-radius: 2px; }
.s1 { margin-left: 32px; }
.s2 { margin-left: 34px; }
.tsearch { width: 36px; height: 30px; margin-left: 35px; }
.music { width: 32px; height: 26px; margin-left: 37px; }
.profile { width: 40px; height: 40px; border-radius: 50%; background: #4a86cb; color: #fff; font-size: 21px; display: grid; place-items: center; margin-left: 35px; }
.dots { width: 8px; height: 28px; margin-left: 48px; }
.bookmarks { height: 68px; background: #faf9ff; display: flex; align-items: center; padding: 0 29px 12px 38px; font-size: 22.500px; color: #46474c; }
.bookmarks span { margin-top: -2px; }
.apps { width: 28px; height: 28px; margin-right: 30px; }
.bsep { width: 4px; height: 32px; background: #d5e2fc; border-radius: 2px; }
.bm { display: flex; align-items: center; gap: 12px; white-space: nowrap; }
.bm svg { width: 32px; height: 32px; }
.bm.gm { margin-left: 28px; width: 138px; }
.bm.yt { width: 169px; }
.bm.mp { width: 136px; }
.bm.an { width: 307px; letter-spacing: .1px; }
.bm.cr { width: 300px; letter-spacing: .2px; }
.bm.ad { letter-spacing: .45px; }
.bm .globe { width: 28px; height: 28px; margin: 2px 0 2px 2px; color: #3c4043; }
.allbm { margin-left: auto; display: flex; align-items: center; white-space: nowrap; }
.allbm svg { width: 32px; height: 26px; margin: 0 16px 0 32px; }
.ico-in { font: 700 24px "Open Sans", sans-serif; fill: #fff; }
.ico-le { font: 700 43px "Liberation Mono", monospace; fill: #5f9fea; }
.ico-n { font: 700 44px "Liberation Sans", sans-serif; fill: #c62828; }
.ico-z { font: 700 18px Roboto, sans-serif; fill: #fff; }
.ico-png { font: 700 16.500px "Liberation Sans", sans-serif; fill: #fff; }
.ico-a { font: 700 22px Inter, sans-serif; fill: #fff; }
.ico-c { font: italic 700 26px "Liberation Serif", serif; fill: #fff; }

/* application header */
.appbar { flex: none; height: 72px; display: flex; align-items: center; border-bottom: 2px solid #e5e9f1; color: #516381; font-size: 21px; white-space: nowrap; }
.collapse { width: 72px; height: 70px; border-right: 1px solid #e3e8f2; display: grid; place-items: center; }
.collapse svg { width: 24px; height: 24px; }
.elastic { width: 34px; height: 34px; margin-left: 37px; }
.dbadge { width: 36px; height: 36px; border-radius: 6px; margin-left: 37px; background: #66bbb2; color: #000; font-size: 18px; font-weight: 500; display: grid; place-items: center; }
.sl { width: 8px; height: 24px; margin-top: 3px; }
.sl.dark { margin-left: 20px; }
.crumb { display: flex; align-items: center; }
.c1 { width: 224px; margin-left: 15px; gap: 7px; }
.c1 u { text-underline-offset: 4px; text-decoration-thickness: 1.500px; }
.c1 svg { width: 17px; height: 17px; }
.c2 { width: 201px; margin-left: 11px; }
.c3 { margin-left: 8px; }
.appright { margin-left: auto; display: flex; align-items: center; padding-right: 12px; color: #2b394f; }
.ai { width: 24px; height: 24px; }
.help { margin-left: 36px; }
.feedback { width: 217px; height: 48px; margin-left: 18px; border-radius: 6px; background: #f6e8bc; color: #6a4906; font-weight: 500; display: flex; align-items: center; justify-content: center; gap: 14px; }
.feedback svg { width: 22px; height: 22px; }
.party { margin-left: 30px; }
.user { width: 60px; height: 60px; border-radius: 6px; background: #ecf1f9; margin-left: 42px; display: grid; place-items: center; }
.user span { width: 36px; height: 36px; border-radius: 50%; background: #f3c8c0; color: #000; font-size: 18px; font-weight: 500; display: flex; align-items: center; justify-content: center; }

.workspace { flex: none; height: 1190px; display: flex; }

/* side navigation */
.side { width: 372px; border-right: 1px solid #dfe4ec; display: flex; flex-direction: column; background: #fff; }
.solution { height: 50px; margin: 10px 0 14px; padding-left: 23px; display: flex; align-items: center; gap: 23px; }
.solution svg { width: 26px; height: 32px; }
.solution b { font-weight: 600; }
.grp { margin-bottom: 24px; }
.it { height: 48px; padding: 0 21px 0 24px; display: flex; align-items: center; justify-content: space-between; }
.it svg, .si svg { width: 24px; height: 18px; }
.foot { margin-top: auto; height: 343px; border-top: 1px solid #dfe4ec; padding-top: 17px; }
.fi { height: 48px; padding-left: 21px; display: flex; align-items: center; gap: 9px; }
.fi svg { width: 24px; height: 24px; }
.fi svg.up { width: 18px; height: 18px; margin-left: auto; margin-right: 27px; }
.sub { margin: 0 12px 0 30px; padding-left: 18px; border-left: 1px solid #dfe4ec; }
.si { height: 48px; padding: 0 9px 0 12px; display: flex; align-items: center; justify-content: space-between; border-radius: 6px; white-space: nowrap; }
.si.on { background: #dde8fd; color: #3a55be; }
.si svg.po { width: 17px; height: 17px; margin-right: 3px; }

/* dimmed page */
.main { width: 908px; background: #828a9c; padding: 38px 0 0 36px; color: #414c66; }
h1 { font-size: 45.400px; line-height: 50px; font-weight: 600; color: #3c4762; }
.lead { margin-top: 38px; font-size: 24px; line-height: 36px; color: #475370; letter-spacing: .1px; }
.tabs { margin-top: 37px; height: 60px; border-bottom: 1px solid #7b8498; display: flex; font-size: 24px; font-weight: 600; line-height: 57px; color: #3c4762; gap: 36px; letter-spacing: .1px; }
.tabs span { padding: 0 6px; }
.tabs .cur { color: #45578f; border-bottom: 3px solid #45578f; }
.searchbox { margin-top: 36px; height: 60px; border: 2px solid #79829a; border-right: 0; border-radius: 6px 0 0 6px; padding-left: 16px; display: flex; align-items: center; gap: 12px; color: #5b6680; }
.searchbox svg { width: 24px; height: 24px; color: #414c66; }
.row { height: 72px; border-bottom: 1px solid #7a8398; display: flex; align-items: center; padding-left: 12px; }
.row.head { margin-top: 35px; height: 48px; font-size: 18px; font-weight: 500; }
.cb { width: 24px; height: 24px; border-radius: 6px; background: #727c95; }
.nm { width: 517px; margin-left: 24px; }
.link { color: #45578f; font-weight: 500; }
.pager { margin: 30px 0 0 12px; height: 36px; display: flex; align-items: center; gap: 12px; font-size: 18px; font-weight: 500; }
.pager svg { width: 18px; height: 18px; }

/* flyout */
.flyout { position: relative; width: 1280px; background: #fff; display: flex; flex-direction: column; box-shadow: -2px 0 18px rgba(60, 68, 90, .45); clip-path: inset(0 0 0 -30px); }
.fclose { position: absolute; width: 20px; height: 20px; right: 20px; top: 20px; }
.fhead { height: 192px; border-bottom: 1px solid #dfe4ec; padding: 0 36px; display: flex; align-items: center; gap: 24px; }
.fhead > svg { width: 48px; height: 46px; }
h2 { font-size: 30px; line-height: 36px; font-weight: 600; color: #111c2c; }
.fhead p { line-height: 30px; color: #6a7a99; }
.compat { height: 30px; margin-top: 24px; display: flex; align-items: center; gap: 6px; }
.compat span { height: 29px; line-height: 29px; padding: 0 13px; border-radius: 4px; background: #e3e8f2; font-size: 18px; font-weight: 500; color: #111c2c; }
.fbody { padding: 42px 36px 0; flex: 1; }
label { display: block; font-size: 18px; line-height: 24px; font-weight: 500; color: #111c2c; }
.input { margin-top: 6px; height: 60px; border: 1.500px solid #ccd5e6; border-radius: 6px; display: flex; align-items: center; padding: 0 17px; white-space: nowrap; justify-content: space-between; }
.input svg { width: 24px; height: 24px; margin-right: -1px; }
.urlf .input { letter-spacing: .07px; }
h3 { font-size: 21px; line-height: 30px; font-weight: 600; margin-top: 24px; color: #111c2c; letter-spacing: .07px; }
.pair { margin-top: 12px; display: flex; gap: 36px; }
.method { width: 129px; }
.urlf { flex: 1; min-width: 0; }
.cards { margin-top: 24px; display: flex; flex-direction: column; gap: 12px; }
.card { height: 72px; border: 1px solid #e3e8f2; border-radius: 6px; display: flex; align-items: center; overflow: hidden; }
.card div { width: 71px; height: 100%; padding-right: 1px; background: #f7f9fe; display: grid; place-items: center; }
.card i { width: 24px; height: 24px; border-radius: 50%; border: 1px solid #98a8c3; background: #fff; }
.card.sel div { background: #e8f0ff; }
.card.sel i { border: 7.500px solid #4164d6; }
.card span { margin-left: 24px; }
.switches { margin-top: 36px; display: flex; flex-direction: column; gap: 24px; }
.sw { height: 30px; display: flex; align-items: center; gap: 12px; }
.sw i { width: 66px; height: 30px; border-radius: 15px; background: #5f6d89; display: flex; align-items: center; padding-left: 1px; gap: 8px; }
.sw b { width: 28px; height: 28px; border-radius: 50%; background: #fff; }
.sw svg { width: 21px; height: 21px; color: #fff; }
.btns { margin-top: 24px; display: flex; gap: 36px; }
.btn { width: 168px; height: 60px; border-radius: 6px; display: grid; place-items: center; font-weight: 500; }
.soft { background: #dde8fd; color: #3351b4; }
.solid { background: #4164d6; color: #fff; font-weight: 600; }
.ffoot { height: 108px; background: #f7f9fe; padding-left: 54px; display: flex; align-items: center; color: #3351b4; font-weight: 500; }

/* taskbar */
.taskbar { flex: none; height: 96px; background: #eee; border-top: 2px solid #b9b9b9; display: flex; font-family: "Open Sans", "Noto Sans", sans-serif; }
.weather { width: 330px; padding: 29px 0 0 40px; position: relative; }
.weather svg { width: 40px; height: 42px; }
.weather span { position: absolute; left: 62px; top: 12px; width: 32px; height: 32px; border-radius: 50%; background: #c42b1c; color: #fff; font-size: 19px; display: grid; place-items: center; }
.tasks { display: flex; }
.t { width: 88px; height: 94px; position: relative; display: flex; justify-content: center; padding-top: 22px; }
.t > svg { width: 48px; height: 48px; z-index: 1; }
.t > i { position: absolute; left: 38px; top: 78px; width: 12px; height: 6px; border-radius: 3px; background: #868686; }
.t.active::before, .t.alert::before { content: ""; position: absolute; left: 5px; top: 6px; width: 78px; height: 80px; border-radius: 8px; background: #f8f8f8; border: 2px solid #e3e3e3; }
.t.alert::before { background: #e9adaa; border-color: #ebb5b2; }
.t.active > i { left: 28px; width: 32px; background: #0078d4; }
.t.alert > i { background: #c42b1c; }
.t em { position: absolute; z-index: 2; top: 12px; left: 46px; height: 32px; width: 32px; border-radius: 16px; display: grid; place-items: center; color: #fff; font-size: 20px; }
.bd-m { background: #0b82cc; }
.t em.bd-30 { background: #0078d4; width: 40px; left: 42px; font-size: 19px; }
.bd-mail { background: #005fb8; }
.bd-mail.light { background: #60cdff; }
.bd-mail svg { width: 21px; height: 17px; }
.t em.light { color: #000; }
.tray { margin-left: auto; display: flex; align-items: center; padding-right: 39px; color: #1a1a1a; }
.y1 { width: 22px; height: 14px; }
.y2 { width: 34px; height: 28px; margin-left: 36px; }
.y3 { width: 32px; height: 24px; margin-left: 31px; }
.y4 { width: 32px; height: 28px; margin-left: 16px; }
.y5 { width: 34px; height: 28px; margin-left: 16px; }
.clock { width: 130px; display: flex; flex-direction: column; align-items: flex-end; font-size: 22.500px; letter-spacing: .3px; line-height: 32px; margin-top: -3px; white-space: nowrap; }
```
